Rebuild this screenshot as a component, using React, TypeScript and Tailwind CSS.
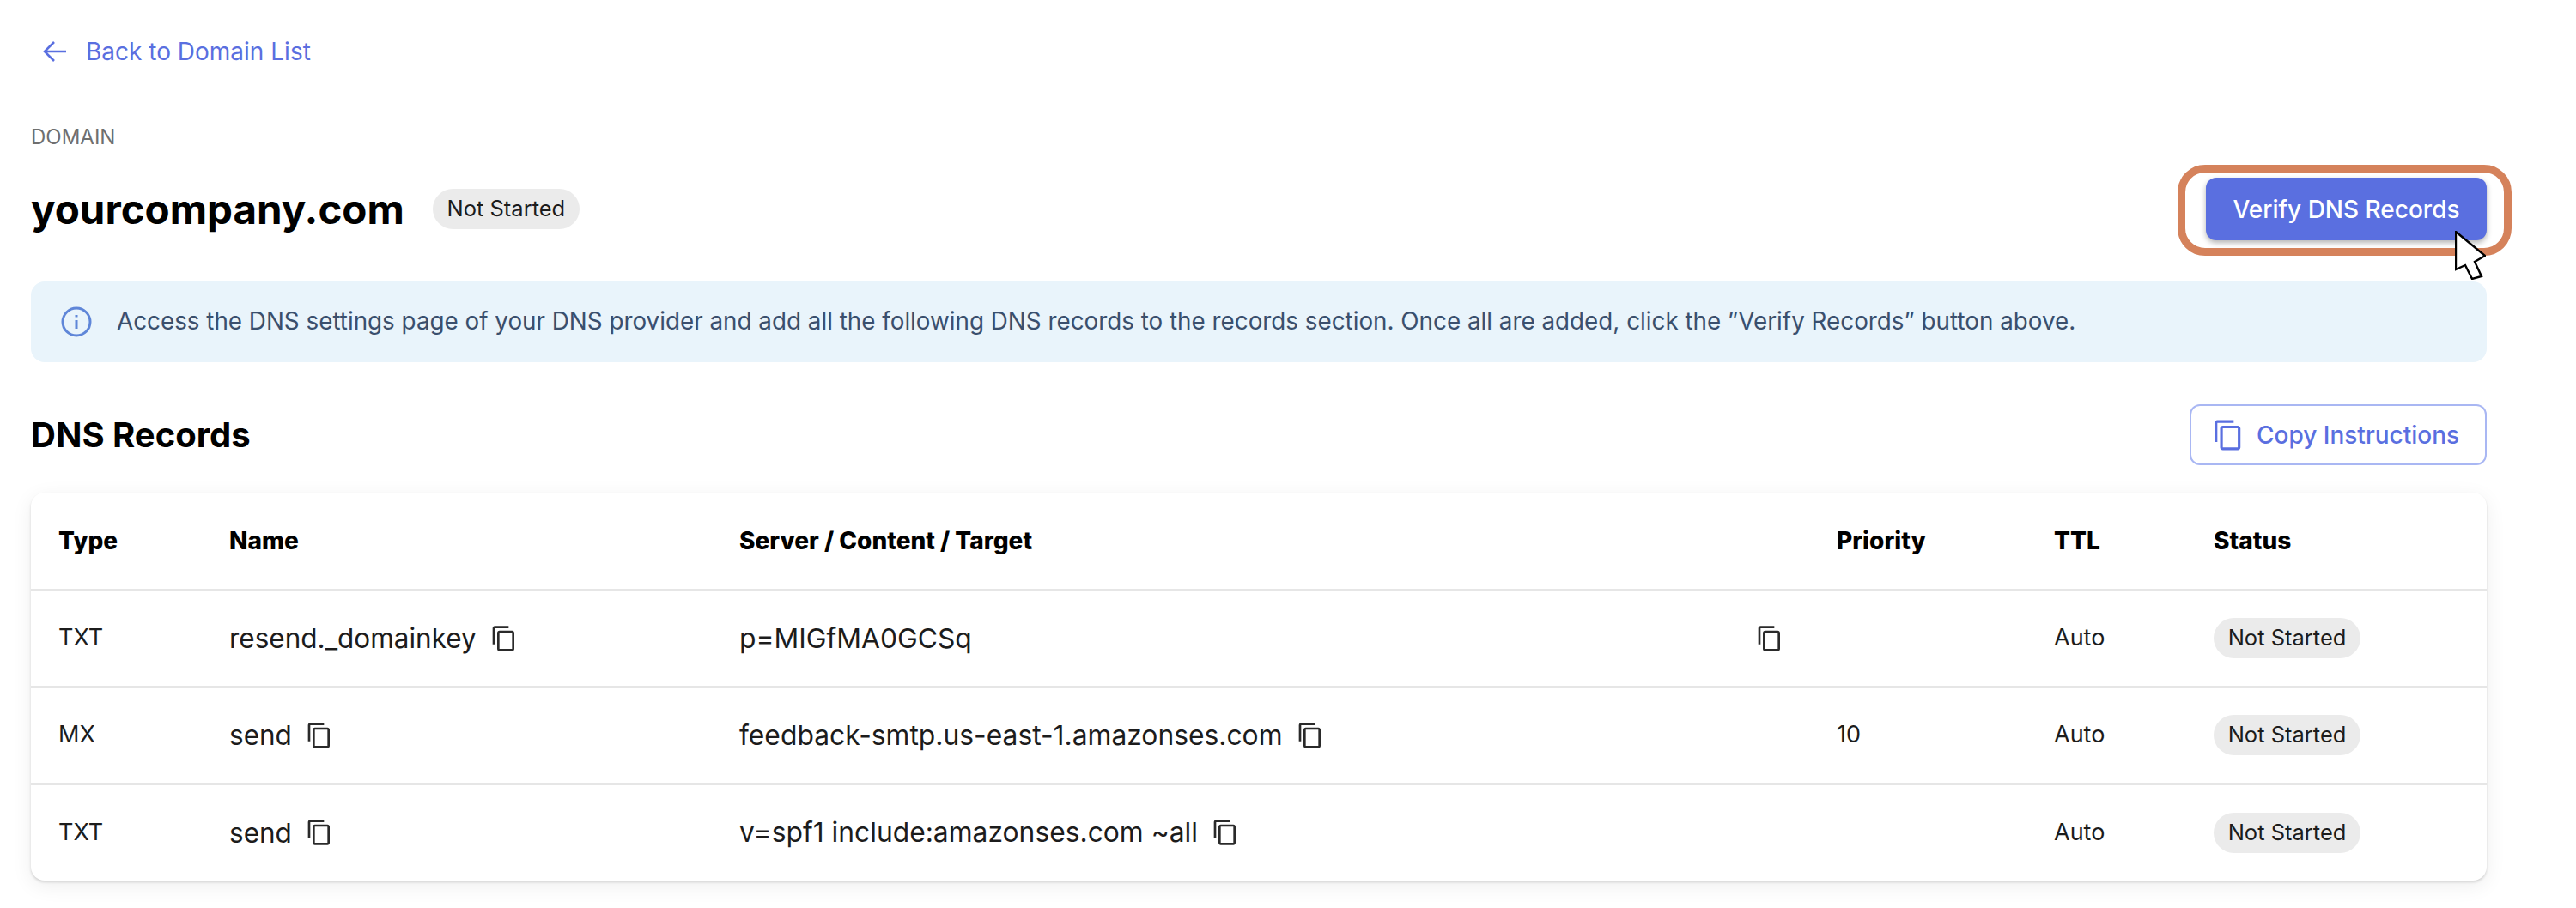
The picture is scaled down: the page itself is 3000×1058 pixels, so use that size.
const CopyIcon = ({ className }: { className: string }) => (
  <svg viewBox="0 0 24 24" fill="currentColor" className={className}>
    <path d="M16 1H4c-1.1 0-2 .9-2 2v14h2V3h12V1zm3 4H8c-1.1 0-2 .9-2 2v14c0 1.1.9 2 2 2h11c1.1 0 2-.9 2-2V7c0-1.1-.9-2-2-2zm0 16H8V7h11v14z" />
  </svg>
);

const Badge = () => (
  <span className="inline-flex h-[47px] w-[171px] items-center justify-center rounded-full bg-[#ebebeb] text-[25.5px] text-[#1c1c1c]">
    Not Started
  </span>
);

const rows = [
  { type: "TXT", name: "resend._domainkey", value: "p=MIGfMA0GCSq", priority: "", wide: true },
  { type: "MX", name: "send", value: "feedback-smtp.us-east-1.amazonses.com", priority: "10", wide: false },
  { type: "TXT", name: "send", value: "v=spf1 include:amazonses.com ~all", priority: "", wide: false },
];

const App = () => {
  return (
    <div className="h-[1058px] overflow-hidden bg-white pl-9 pr-[104px] font-['Inter',sans-serif] text-[#1c1c1c]">
      <a className="mt-10 flex h-10 items-center pl-3.5 text-[28px] text-[#5a6fe0]">
        <svg viewBox="0 0 28 26" fill="none" stroke="currentColor" strokeWidth="2.6" className="mr-[22px] h-[26px] w-7">
          <path d="M27 13H2M13 2 2 13l11 11" />
        </svg>
        Back to Domain List
      </a>

      <div className="mt-[61px] flex h-[38px] items-center text-[24px] text-[#6f6f6f]">DOMAIN</div>

      <div className="mt-7 flex h-[73px] items-center justify-between">
        <div className="flex items-center gap-[33px]">
          <h1 className="text-[47.5px] font-bold text-black">yourcompany.com</h1>
          <Badge />
        </div>
        <div className="relative">
          <button className="h-[73px] w-[327px] rounded-xl bg-[#5a6fe0] text-[28px] font-medium text-white shadow-[0_3px_6px_rgba(0,0,0,0.3)]">
            Verify DNS Records
          </button>
          <div className="absolute -bottom-[18px] -left-[33px] -right-[29px] -top-[15px] rounded-[32px] border-[9px] border-[#d5825b]" />
          <svg viewBox="0 0 36 57" className="absolute left-[290px] top-[62px] h-[57px] w-9">
            <path d="M1 1 35 29 23 36 31 53 20 56 12 40 1 45Z" fill="white" stroke="black" strokeWidth="2.4" />
          </svg>
        </div>
      </div>

      <div className="mt-12 flex h-[94px] items-center gap-[29px] rounded-2xl bg-[#e9f4fb] pl-[35px] text-[27.8px] text-[#3a4f6d]">
        <svg viewBox="0 0 36 36" fill="none" className="h-9 w-9 text-[#5f86d8]" stroke="currentColor" strokeWidth="3">
          <circle cx="18" cy="18" r="16" />
          <path d="M18 16v10M18 10v2.5" />
        </svg>
        <p>
          Access the DNS settings page of your DNS provider and add all the following DNS records to the records section. Once all are added, click the ”Verify Records” button above.
        </p>
      </div>

      <div className="mt-[49px] flex h-[71px] items-center justify-between">
        <h2 className="text-[40px] font-bold text-black">DNS Records</h2>
        <button className="flex h-[71px] w-[346px] items-center gap-3.5 rounded-xl border-2 border-[#a9b7f3] pl-[24px] text-[28px] font-medium text-[#5a6fe0]">
          <CopyIcon className="h-[38px] w-[38px]" />
          Copy Instructions
        </button>
      </div>

      <div className="mt-8 overflow-hidden rounded-2xl bg-white shadow-[0_2px_3px_rgba(0,0,0,0.14),0_6px_24px_rgba(0,0,0,0.07)]">
        <table className="w-full table-fixed text-left text-[27px]">
          <colgroup>
            <col className="w-[199px]" />
            <col className="w-[594px]" />
            <col className="w-[1278px]" />
            <col className="w-[253px]" />
            <col className="w-[186px]" />
            <col />
          </colgroup>
          <thead>
            <tr className="h-[113px] text-[28px] text-black">
              <th className="pl-8 font-extrabold">Type</th>
              <th className="pl-8 font-extrabold">Name</th>
              <th className="pl-8 font-extrabold">Server / Content / Target</th>
              <th className="pl-8 font-extrabold">Priority</th>
              <th className="pl-8 font-extrabold">TTL</th>
              <th className="pl-8 font-extrabold">Status</th>
            </tr>
          </thead>
          <tbody>
            {rows.map((row, i) => (
              <tr key={i} className="h-[113px] border-t-[3px] border-[#e6e6e6]">
                <td className="pl-8">{row.type}</td>
                <td className="pl-8 text-[31.5px]">
                  <div className="flex items-center gap-4">
                    {row.name}
                    <CopyIcon className="h-8 w-8 text-[#2a2a2a]" />
                  </div>
                </td>
                <td className="pl-8 text-[31.8px]">
                  <div className={row.wide ? "flex w-[1216px] items-center justify-between" : "flex items-center gap-4"}>
                    {row.value}
                    <CopyIcon className="h-8 w-8 text-[#2a2a2a]" />
                  </div>
                </td>
                <td className="pl-8">{row.priority}</td>
                <td className="pl-8">Auto</td>
                <td className="pl-8">
                  <Badge />
                </td>
              </tr>
            ))}
          </tbody>
        </table>
      </div>
    </div>
  );
};

export default App;
